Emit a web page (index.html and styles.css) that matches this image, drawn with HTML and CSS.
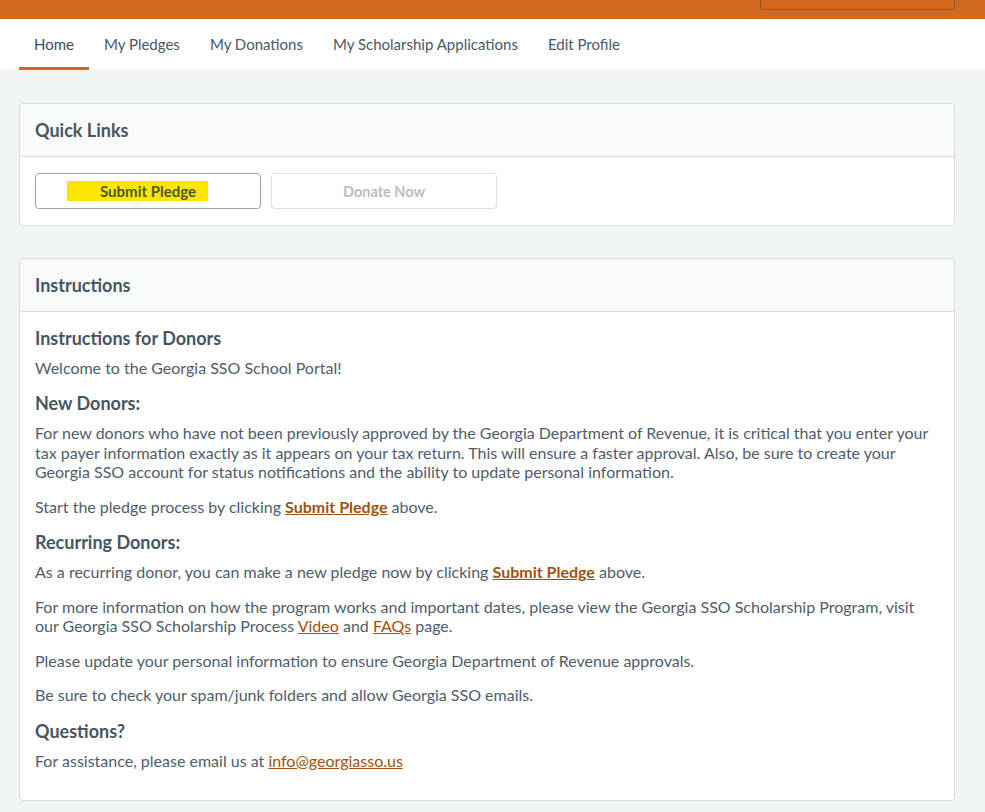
FILE: index.html
```html
<!DOCTYPE html>
<html lang="en">
<head>
    <meta charset="UTF-8">
    <meta name="viewport" content="width=device-width, initial-scale=1.0">
    <title>Georgia SSO - Home</title>
    <link rel="stylesheet" href="styles.css">
</head>
<body>
    <div class="top-bar">
        <div class="account-box"></div>
    </div>

    <nav class="tabs">
        <a href="#" class="tab active">Home</a>
        <a href="#" class="tab">My Pledges</a>
        <a href="#" class="tab">My Donations</a>
        <a href="#" class="tab">My Scholarship Applications</a>
        <a href="#" class="tab">Edit Profile</a>
    </nav>

    <main class="page">
        <section class="card">
            <div class="card-header">Quick Links</div>
            <div class="card-body quick-links">
                <button class="btn"><mark>Submit Pledge</mark></button>
                <button class="btn" disabled>Donate Now</button>
            </div>
        </section>

        <section class="card">
            <div class="card-header">Instructions</div>
            <div class="card-body instructions">
                <h3>Instructions for Donors</h3>
                <p>Welcome to the Georgia SSO School Portal!</p>

                <h3>New Donors:</h3>
                <p>For new donors who have not been previously approved by the Georgia Department of Revenue, it is critical that you enter your tax payer information exactly as it appears on your tax return. This will ensure a faster approval. Also, be sure to create your Georgia SSO account for status notifications and the ability to update personal information.</p>
                <p>Start the pledge process by clicking <a href="#" class="strong-link">Submit Pledge</a> above.</p>

                <h3>Recurring Donors:</h3>
                <p>As a recurring donor, you can make a new pledge now by clicking <a href="#" class="strong-link">Submit Pledge</a> above.</p>
                <p>For more information on how the program works and important dates, please view the Georgia SSO Scholarship Program, visit our Georgia SSO Scholarship Process <a href="#">Video</a> and <a href="#">FAQs</a> page.</p>
                <p>Please update your personal information to ensure Georgia Department of Revenue approvals.</p>
                <p>Be sure to check your spam/junk folders and allow Georgia SSO emails.</p>

                <h3>Questions?</h3>
                <p>For assistance, please email us at <a href="#">info@georgiasso.us</a></p>
            </div>
        </section>
    </main>
</body>
</html>
```

FILE: styles.css
```css
body {
    font-family: Lato, "Open Sans", sans-serif;
    background-color: #f1f4f5;
    color: #4e5d6c;
    margin: 0;
}
.top-bar {
    background-color: #d2691f;
    height: 19px;
    padding: 0 30px 0 0;
    display: flex;
    justify-content: flex-end;
}
.account-box {
    width: 193px;
    height: 9px;
    border: 1px solid #8a5a3a;
    border-top: none;
    border-radius: 0 0 4px 4px;
}
.tabs {
    background-color: #ffffff;
    height: 51px;
    padding: 0 19px;
    display: flex;
}
.tab {
    color: #4a5868;
    text-decoration: none;
    font-size: 15px;
    padding: 16px 15px 0;
    border-bottom: 3px solid transparent;
}
.tab.active {
    border-bottom-color: #d2691f;
    color: #3e4c5a;
}
.page {
    padding: 33px 30px 12px 19px;
}
.card {
    background-color: #ffffff;
    border: 1px solid #d5dbe0;
    border-radius: 4px;
    margin-bottom: 32px;
}
.card-header {
    background-color: #f9fafa;
    border-bottom: 1px solid #d5dbe0;
    border-radius: 4px 4px 0 0;
    height: 52px;
    line-height: 52px;
    padding: 0 15px;
    font-size: 18px;
    font-weight: bold;
    color: #475563;
}
.card-body {
    padding: 16px 15px;
}
.quick-links {
    display: flex;
    gap: 10px;
}
.btn {
    width: 226px;
    height: 36px;
    background-color: #ffffff;
    border: 1px solid #9aa4ad;
    border-radius: 4px;
    font-family: inherit;
    font-size: 15px;
    font-weight: bold;
    color: #475563;
}
.btn mark {
    background-color: #ffe600;
    color: #4a5a2a;
    padding: 1px 12px 1px 33px;
    margin-left: -21px;
}
.btn:disabled {
    border-color: #dde2e6;
    color: #b8bec4;
    font-size: 14.5px;
}
.instructions {
    padding: 14.5px 15px 15px;
    font-size: 16px;
    line-height: 19.5px;
}
.instructions h3 {
    font-size: 18px;
    line-height: 22.5px;
    color: #475563;
    margin: 0 0 8.5px;
}
.instructions p {
    margin: 0 0 15px;
}
.instructions a {
    color: #a0520d;
}
.instructions .strong-link {
    font-weight: bold;
}
```
